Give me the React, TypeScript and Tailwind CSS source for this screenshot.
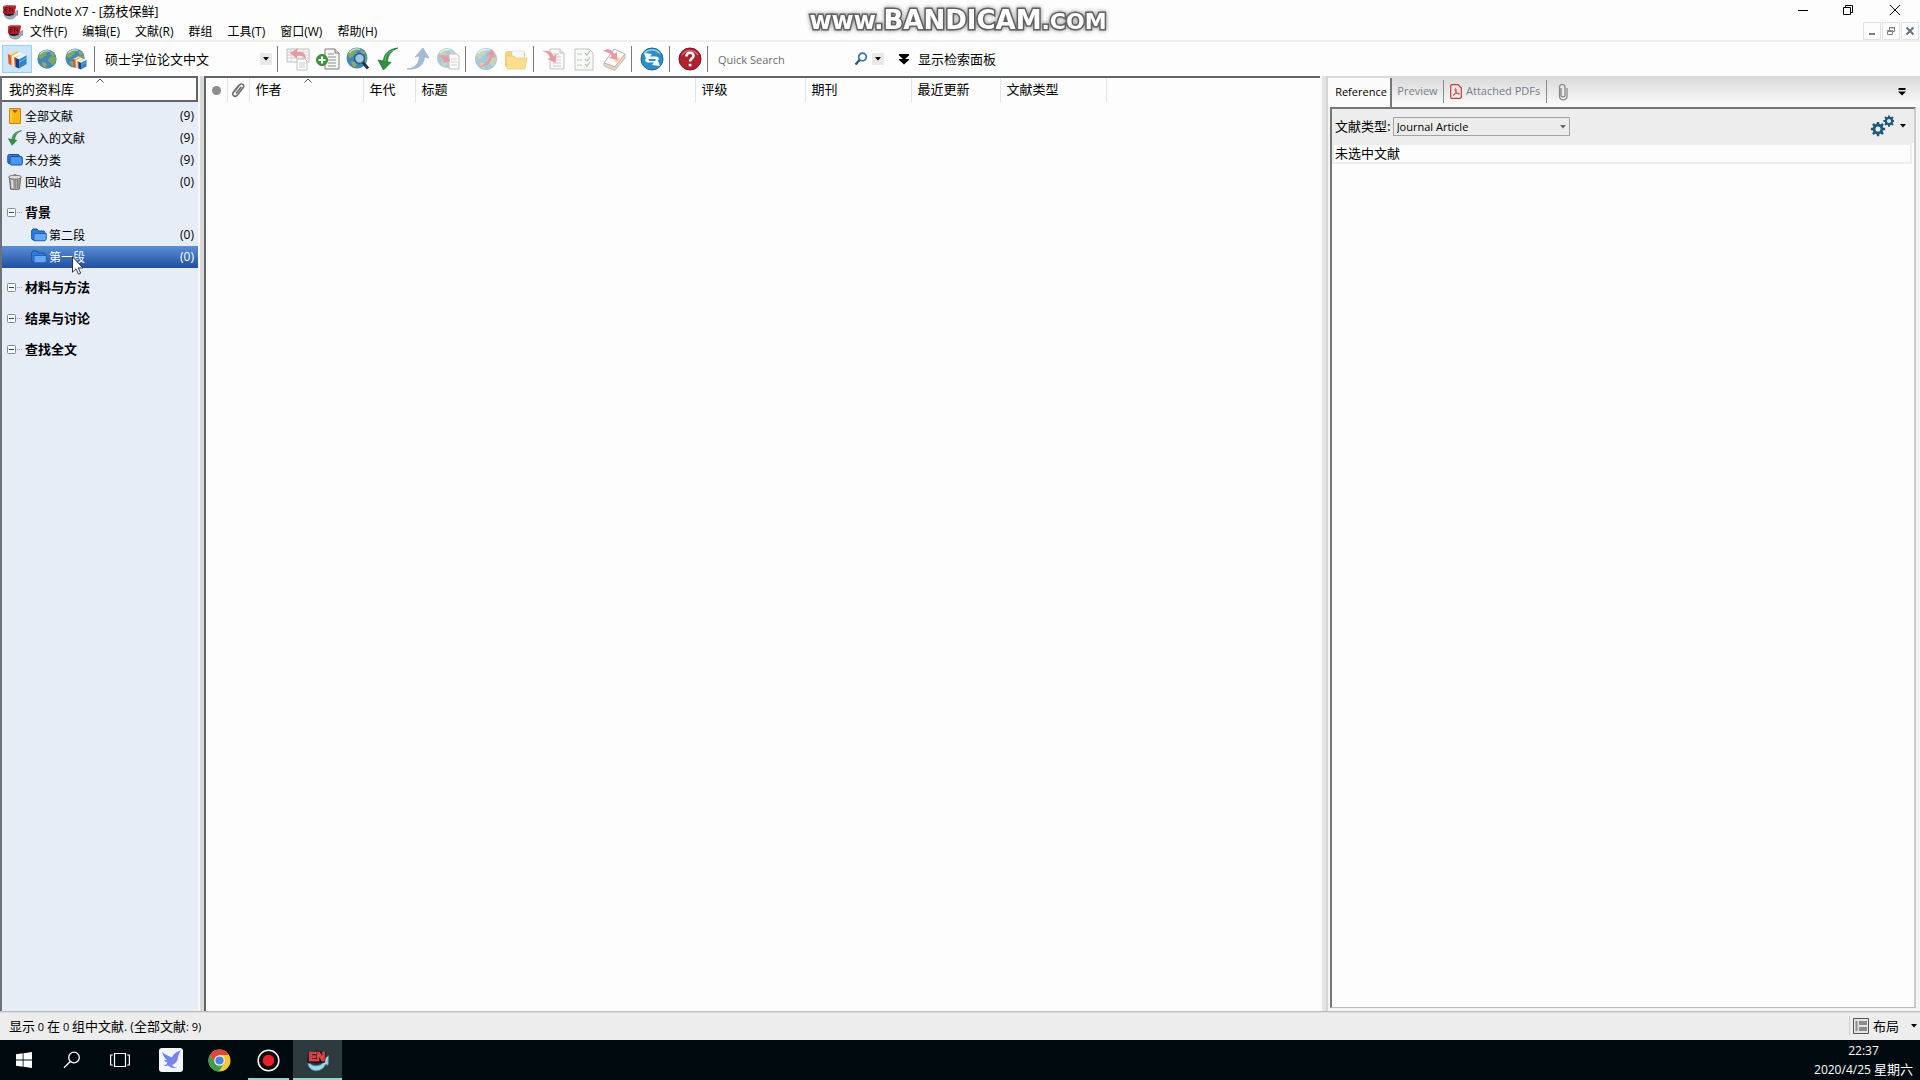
import React from "react";

type P = { className?: string };

const latin = "font-['Open_Sans','Noto_Sans_CJK_SC',sans-serif]";
const cjk = "font-['Noto_Sans_CJK_SC',sans-serif]";

/* ---------- application icons ---------- */

function EndNoteIcon({ className = "size-4" }: P) {
  return (
    <svg viewBox="0 0 24 24" className={className} aria-hidden="true">
      <path d="M2 15c1 9 14 11 18.500 1l2.500 1 .5-10-7 5 2.500 1C16 18 8 19 4 15z" fill="#9fd6ea" stroke="#4f8ba8" strokeWidth=".8" />
      <path d="M2 3l8-1.500L21 3l-1 11-8 1-9-.5L1 13z" fill="#2a1216" />
      <text x="2.500" y="13" fontSize="12.500" fontWeight="900" fontFamily="Liberation Sans, sans-serif" fill="#c81f2a" stroke="#f06a6a" strokeWidth=".7">
        EN
      </text>
    </svg>
  );
}

function EndNoteMini({ className = "size-4" }: P) {
  return (
    <svg viewBox="0 0 16 16" className={className} aria-hidden="true">
      <path d="M2 10.500c1 5.500 10 6.500 12 .5l1.500.3.300-5-3.300 2.200 1 .5c-1.500 3.500-6 4-9 1.500z" fill="#9fb6c6" stroke="#5c6b7a" strokeWidth=".6" />
      <path d="M1.200 2l4-1 8 .3 1 1-1.700 7L8 11l-5-.3-2-1.700z" fill="#b3222e" />
      <path d="M1.500 8.500L4 10l7-.2 1.500-1.300-1 2.500-4 1L3.500 11.500z" fill="#2e1418" />
      <path d="M3.500 3.500h2.200M3.500 5.500h2M3 7.800h2.500M3.500 3.500L3 7.800M7.500 8V3.500l3 4V3.500" stroke="#5a0d16" strokeWidth=".9" fill="none" />
      <path d="M2 2.300l4-.8 7 .3" stroke="#e8797f" strokeWidth=".7" fill="none" />
    </svg>
  );
}

function Globe({ x = 12, y = 12, r = 10.5 }: { x?: number; y?: number; r?: number }) {
  return (
    <g transform={`translate(${x} ${y}) scale(${r / 10})`}>
      <circle r="10" fill="#4389b4" />
      <path d="M-9-3c1-4 5-7 9-6l1 2-2 1 1 2-3 1-1 2-3 1-1-1zM2-1l3-2 4 1c1 4-1 7-4 9L4 4 1 2z" fill="#7fa865" />
      <path d="M-5 3l4 1 1 2-2 3c-2-1-4-4-3-6zM3-8l4 2 1 3-4-1z" fill="#93a768" />
      <path d="M-7-5c3-4 7-4 10-3" stroke="#c4e4f0" strokeWidth="1.200" fill="none" />
    </g>
  );
}

function Books() {
  return (
    <g>
      <path d="M1 6l9-4.500 3 1.500-8.500 4.500z" fill="#f3d9b4" />
      <path d="M1 6l3.500 1.500 1 12L2 18z" fill="#dc5a24" />
      <path d="M4.500 7.500L13 3l1 1v12l-8.500 3.500z" fill="#f1b03c" />
      <path d="M6 8.500l8-4.500 4 1.500-8.500 4.500z" fill="#fafafa" />
      <path d="M6 8.500L9.500 10l1 12L7 20.500z" fill="#f4f2ec" />
      <path d="M8.500 9.500L10 10l.7 12-1.500-.7z" fill="#d2452f" />
      <path d="M10 10.500l9-5 4.500 2-9 5z" fill="#e9f1f7" />
      <path d="M10 10.500l4.500 2v11L10.800 22z" fill="#173f7e" />
      <path d="M14.500 12.500l9-5v10.500l-9 5.500z" fill="#3183c9" />
      <path d="M14.500 16l9-5.500" stroke="#8ec3ea" strokeWidth="1" />
    </g>
  );
}

function Icon({ children, className = "size-6" }: P & { children: React.ReactNode }) {
  return (
    <svg viewBox="0 0 24 24" className={className} fill="none" aria-hidden="true">
      {children}
    </svg>
  );
}

function Page({ x = 8, y = 2 }: { x?: number; y?: number }) {
  return (
    <g transform={`translate(${x} ${y})`}>
      <path d="M0 0h10l4 4v16H0z" fill="#f6f6f4" stroke="#7a7f7c" strokeWidth="1" />
      <path d="M10 0v4h4" stroke="#7a7f7c" strokeWidth="1" fill="#dcdcdc" />
      <path d="M3 5h6M3 8h8M3 11h8M3 14h8M3 17h8" stroke="#8b908d" strokeWidth="1" />
    </g>
  );
}

const redArrow = "M0 4c5-1 10 0 11.500 5l3-2-1 9-8-4 3-1C7 8 5 5 0 4z";

function ImportArrow({ className = "size-6" }: P) {
  return (
    <Icon className={className}>
      <path d="M22 1C13 2 8 6 7.500 14L2 13l5.500 10L15 15.500l-3.500-.7C12 8 15 4 22 1z" fill="#2f9140" stroke="#1d6b2d" strokeWidth=".7" />
      <path d="M18 3C12 5 9.500 8 9 14" stroke="#79bd7f" strokeWidth="1" />
    </Icon>
  );
}

function SearchGlass() {
  return (
    <svg viewBox="0 0 14 14" className="size-3.5" fill="none" aria-hidden="true">
      <circle cx="8.500" cy="5" r="3.800" stroke="#3a77a8" strokeWidth="1.800" />
      <path d="M5.800 7.800L1.500 12.500" stroke="#2c4d6c" strokeWidth="2.200" />
    </svg>
  );
}

function Caret({ className = "" }: P) {
  return (
    <svg viewBox="0 0 6 4" className={"h-1 w-1.5 " + className} aria-hidden="true">
      <path d="M0 0h6L3 3.500z" fill="currentColor" />
    </svg>
  );
}

function Paperclip({ className = "size-4" }: P) {
  return (
    <svg viewBox="0 0 16 16" className={className} fill="none" aria-hidden="true">
      <path d="M4.500 9.500l5-6.500c2-2.300 5.500 0 3.700 2.600L7.300 13.200c-2 2.500-6.200 0-4-3L8.500 3.500M6.500 11L11 5.300" stroke="#6f6f6f" strokeWidth="1.600" strokeLinecap="round" />
    </svg>
  );
}

function FolderIcon() {
  return (
    <svg viewBox="0 0 16 14" className="h-3.5 w-4 shrink-0" aria-hidden="true">
      <path d="M.7 11V2.500L2 1h4l1.500 2H13l1 1.500V12H2z" fill="#2f7fe0" stroke="#164f9e" />
      <path d="M3 5.500h12.300V11L14 12.800H3z" fill="#62a8f5" stroke="#1d5cb0" strokeWidth=".9" />
    </svg>
  );
}

/* ---------- pieces of the toolbar ---------- */

function Divider() {
  return <span className="ml-[5px] mr-2 h-[26px] w-px shrink-0 bg-[#7a7a7a]" />;
}

function Tool({ label, dim, children }: { label: string; dim?: boolean; children: React.ReactNode }) {
  return (
    <button type="button" aria-label={label} disabled={dim} className="flex size-6 shrink-0 items-center justify-center">
      <Icon className={dim ? "size-6 opacity-45" : "size-6"}>{children}</Icon>
    </button>
  );
}

function Toolbar() {
  return (
    <div className="flex h-[34px] shrink-0 items-center bg-[#fdfdfd] pl-0.5">
      <button type="button" aria-label="本地资料库" className="flex h-7 w-[30px] items-center justify-center border border-[#99cdf5] bg-[#cbe6fb]">
        <Icon className="size-5"><Books /></Icon>
      </button>
      <button type="button" aria-label="在线检索" className="flex h-7 w-[30px] items-center justify-center">
        <Icon className="size-[22px]"><Globe /></Icon>
      </button>
      <button type="button" aria-label="综合模式" className="flex h-7 w-[27px] items-center justify-center">
        <Icon className="size-[22px]">
          <Globe x={11} y={11} r={10.500} />
          <g transform="translate(8 8) scale(.66)"><Books /></g>
        </Icon>
      </button>
      <Divider />
      <div className="ml-0.5 flex w-[167px] items-center justify-between">
        <span className={"text-[13px] " + cjk}>硕士学位论文中文</span>
        <button type="button" aria-label="选择样式" className="flex size-3 items-center justify-center bg-[#e9e9e9]">
          <Caret />
        </button>
      </div>
      <Divider />
      <div className="flex gap-1.5">
        <Tool label="复制到资料库" dim>
          <path d="M1 2h22v13H1z" fill="#f2f2f2" stroke="#777" />
          <path d="M1 5h22M1 8h22M1 11h22M5 2v13M17 2v13" stroke="#999" strokeWidth=".8" />
          <path d="M20 12c0-6-4-8-9-7l1-4-8 5 7 6v-3c4-1 6 0 9 3z" fill="#d21f3a" />
          <path d="M11 12h8l2 2v9H11z" fill="#fff" stroke="#777" />
          <path d="M13 16h6M13 18h6M13 20h6" stroke="#999" />
        </Tool>
        <Tool label="新建文献">
          <Page x={9} y={2} />
          <circle cx="6" cy="13" r="5.500" fill="#3d9a38" stroke="#236b22" strokeWidth=".8" />
          <path d="M6 9.500v7M2.500 13h7" stroke="#fff" strokeWidth="2" />
        </Tool>
        <Tool label="在线检索文献">
          <Globe x={11} y={11} r={10.500} />
          <circle cx="13.500" cy="11.500" r="5" fill="#a9d0ea" fillOpacity=".85" stroke="#245d8e" strokeWidth="1.600" />
          <path d="M17 15.500l5 6" stroke="#26344a" strokeWidth="3" />
        </Tool>
        <button type="button" aria-label="导入" className="size-6"><ImportArrow className="size-6" /></button>
        <Tool label="导出" dim>
          <path d="M1 22c9-1 12-6 12.500-13L9 10 17 1l6 10-4.500-1C18 18 12 23 1 22z" fill="#3a6f9e" stroke="#2b567d" strokeWidth=".7" />
        </Tool>
        <Tool label="查找全文" dim>
          <Globe x={11} y={11} r={10} />
          <path d="M13 7h8l2 2v13H13z" fill="#fff" stroke="#777" />
          <path d="M15 12h6M15 15h6M15 18h6" stroke="#999" />
          <path d="M1 9c5-2 8-1 9 1l2-2 2 6-7 2 1-3c-1-2-3-3-7-4z" fill="#d21f3a" />
        </Tool>
      </div>
      <Divider />
      <div className="flex gap-1.5">
        <Tool label="打开链接" dim>
          <Globe r={11} />
          <path d="M5 20c7-3 10-7 11-12l-4 1 6-7 4 9-4-1C17 16 12 20 5 20z" fill="#d21f3a" />
        </Tool>
        <Tool label="打开文件">
          <g opacity=".75">
            <path d="M1 20V6l2-2h6l2 2h10v14z" fill="#f0c552" />
            <path d="M8 4h12v8H8z" fill="#f8f8f4" stroke="#ccc" strokeWidth=".6" />
            <path d="M2 9h8l2 2h11l-2 11H3z" fill="#fad568" stroke="#e0b040" strokeWidth=".6" />
          </g>
        </Tool>
      </div>
      <Divider />
      <div className="flex gap-1.5">
        <Tool label="插入引文" dim>
          <Page x={8} y={2} />
          <path d={redArrow} fill="#d21f3a" />
        </Tool>
        <Tool label="格式化参考文献" dim>
          <path d="M3 2h14l4 4v17H3z" fill="#f6f6f4" stroke="#7a7f7c" />
          <path d="M5 7h5M5 13h5M5 18h5" stroke="#5b9a68" />
          <path d="M13 6l2 2 3-4M13 12l2 2 3-4M13 17l2 2 3-4" stroke="#4b8a58" strokeWidth="1.200" />
        </Tool>
        <Tool label="返回文字处理器" dim>
          <path d="M12 2l11 5-10 13L2 16z" fill="#fbf8f2" stroke="#555" />
          <path d="M23 7v4L13 23.500 2 19v-3l11 4z" fill="#d8a878" stroke="#555" strokeWidth=".8" />
          <path d="M15 10l4 2-3 4-4-2z" fill="#f0a040" />
          <path d="M1 4c5-3 9-2 11 3l3-2v8l-8-2 3-2C8 6 5 5 1 4z" fill="#d21f3a" />
        </Tool>
      </div>
      <Divider />
      <Tool label="同步">
        <circle cx="12" cy="12" r="11" fill="#2e8ec4" stroke="#1a6a99" />
        <path d="M4 6.500c5-5 11-5 16 0" stroke="#8ccbea" strokeWidth="1.500" />
        <path d="M4 6l8 1-2 2.500h6c2 0 3 1.500 3 3l-2 1c-1-1.500-2-1.500-3-1.500H9l-2 2.500zM20 19l-8-1 2-2.500H8c-2 0-3-1.500-3-3l2-1c1 1.500 2 2.500 3 2.500h5l2-2.500z" fill="#f4fafd" />
      </Tool>
      <Divider />
      <Tool label="帮助">
        <circle cx="12" cy="12" r="11" fill="#b0202f" stroke="#7d1420" />
        <path d="M4 8c4-6 12-6 16 0" stroke="#d8606c" strokeWidth="1.500" />
        <path d="M8.500 9.500C8.500 4.500 15.800 4.800 15.500 9c-.2 2.500-3.500 2.800-3.500 5.500" stroke="#fff" strokeWidth="2.600" />
        <path d="M10.700 16.800h2.700v2.500h-2.700z" fill="#fff" />
      </Tool>
      <Divider />
      <div className="flex items-center">
        <input type="search" aria-label="Quick Search" placeholder="Quick Search" className={"ml-0.5 w-[136px] bg-transparent pt-0.5 text-[11px] outline-none placeholder:text-[#6b6b6b] " + latin} />
        <button type="button" aria-label="检索"><SearchGlass /></button>
        <button type="button" aria-label="检索选项" className="ml-1 flex size-3 items-center justify-center bg-[#e9e9e9]">
          <Caret />
        </button>
      </div>
      <button type="button" className={"ml-3.5 flex items-center gap-2 text-[13px] " + cjk}>
        <svg viewBox="0 0 12 12" className="size-3" aria-hidden="true">
          <path d="M1 1h10v1.500L7 6h4v1L6 11.500 1 7V6h4L1 2.500z" fill="#000" />
        </svg>
        显示检索面板
      </button>
    </div>
  );
}

/* ---------- top bars ---------- */

function TitleBar() {
  return (
    <header className="relative flex h-[22px] shrink-0 items-start bg-[#fdfdfd]">
      <div className="flex h-6 items-center gap-[5px] pl-0.5">
        <EndNoteMini />
        <h1 className={"text-xs " + latin}>
          EndNote X7 - [<span className="text-[13px]">荔枝保鲜</span>]
        </h1>
      </div>
      <div className="absolute left-1/2 top-1 z-10 flex h-8 -translate-x-1/2 items-baseline whitespace-nowrap pr-1 font-['DejaVu_Sans',sans-serif] font-bold leading-8 text-white [-webkit-text-stroke:3px_#606060] [filter:drop-shadow(0_0_2px_#888)] [paint-order:stroke_fill]">
        <span className="text-2xl leading-8">www.</span>
        <span className="text-[26px] leading-8">BANDICAM</span>
        <span className="text-[22px] leading-8">.COM</span>
      </div>
      <div className="ml-auto flex h-5 items-center">
        <button type="button" aria-label="最小化" className="flex w-[45px] justify-center">
          <svg viewBox="0 0 12 12" className="size-3"><path d="M1 6.500h10" stroke="#000" /></svg>
        </button>
        <button type="button" aria-label="还原" className="flex w-[45px] justify-center">
          <svg viewBox="0 0 12 12" className="size-3" fill="none" stroke="#000"><path d="M1.500 3.500h7v7h-7zM3.500 3V1.500h7v7H9" /></svg>
        </button>
        <button type="button" aria-label="关闭" className="flex w-[50px] justify-center">
          <svg viewBox="0 0 12 12" className="size-3" fill="none" stroke="#000"><path d="M1 1l10 10M11 1L1 11" /></svg>
        </button>
      </div>
    </header>
  );
}

const menus = ["文件(F)", "编辑(E)", "文献(R)", "群组", "工具(T)", "窗口(W)", "帮助(H)"];

function MenuBar() {
  const box = "flex h-[18px] w-[18px] items-center justify-center border border-[#e2e2e2]";
  return (
    <div className="flex h-5 shrink-0 items-end border-b-2 border-[#efefef] bg-[#fdfdfd] pl-[7px]">
      <EndNoteMini />
      <nav className={"ml-[7px] flex gap-[15px] text-xs leading-4 " + latin}>
        {menus.map((m) => (
          <button type="button" key={m} className="whitespace-nowrap">{m}</button>
        ))}
      </nav>
      <div className="ml-auto mr-px flex gap-px">
        <button type="button" aria-label="最小化文档" className={box}>
          <svg viewBox="0 0 10 10" className="size-2.5"><path d="M2 8h6" stroke="#777f87" strokeWidth="2" /></svg>
        </button>
        <button type="button" aria-label="还原文档" className={box}>
          <svg viewBox="0 0 10 10" className="size-2.5" fill="none" stroke="#777f87"><path d="M1.500 5.500h5v3h-5zM1 4.700h6M3.500 4V1.500h5v4H7M3 1.800h6" /></svg>
        </button>
        <button type="button" aria-label="关闭文档" className={box}>
          <svg viewBox="0 0 10 10" className="size-2.5"><path d="M1.500 1.500l7 7M8.500 1.500l-7 7" stroke="#68727c" strokeWidth="2" /></svg>
        </button>
      </div>
    </div>
  );
}

/* ---------- sidebar ---------- */

function SortMark({ className = "" }: P) {
  return (
    <svg viewBox="0 0 8 5" className={"absolute top-0 h-[5px] w-2 " + className} fill="none" aria-hidden="true">
      <path d="M.5 4.500L4 1l3.500 3.500" stroke="#555" />
    </svg>
  );
}

function Count({ n }: { n: number }) {
  return <span className={"ml-auto text-xs " + latin}>({n})</span>;
}

const libraryRows: { label: string; n: number; icon: React.ReactNode }[] = [
  {
    label: "全部文献",
    n: 9,
    icon: (
      <svg viewBox="0 0 16 16" className="size-4 shrink-0" aria-hidden="true">
        <path d="M2.500.5h11v15h-11z" fill="#fbb713" stroke="#c98508" />
        <path d="M5 2h6L8 5z" fill="#a0522d" />
        <path d="M4 2v12" stroke="#ffdc73" />
      </svg>
    ),
  },
  { label: "导入的文献", n: 9, icon: <ImportArrow className="size-4 shrink-0" /> },
  {
    label: "未分类",
    n: 9,
    icon: (
      <svg viewBox="0 0 16 14" className="h-3.5 w-4 shrink-0" aria-hidden="true">
        <rect x=".8" y="1.500" width="11.500" height="9" rx="1.500" fill="#2f7fe0" stroke="#164f9e" />
        <rect x="3" y="3.500" width="12.300" height="8.500" rx="1.500" fill="#4a96f2" stroke="#164f9e" />
      </svg>
    ),
  },
  {
    label: "回收站",
    n: 0,
    icon: (
      <svg viewBox="0 0 16 16" className="size-4 shrink-0" aria-hidden="true">
        <path d="M2.500 4h11L12.500 15c-2 1-7 1-9 0z" fill="#a9a9a6" stroke="#5e5e5a" />
        <path d="M5 6l.5 8" stroke="#e6e6e2" strokeWidth="1.500" />
        <path d="M8 6v8.500M11 6l-.5 8" stroke="#777773" />
        <ellipse cx="8" cy="3.200" rx="6.500" ry="2" fill="#dededa" stroke="#5e5e5a" strokeWidth=".8" />
        <path d="M6.500 1.500c.5-1 2.500-1 3 0" stroke="#5e5e5a" fill="none" />
      </svg>
    ),
  },
];

function GroupHead({ label }: { label: string }) {
  return (
    <button type="button" aria-expanded="true" className={"mt-[9px] flex h-[22px] w-full items-center pb-0.5 pl-[5px] text-[13px] font-bold " + cjk}>
      <svg viewBox="0 0 18 9" className="h-[9px] w-[18px]" fill="none" aria-hidden="true">
        <rect x=".5" y=".5" width="8" height="8" rx="1" fill="#fff" stroke="#848b94" />
        <path d="M2 4.500h5" stroke="#34445c" />
        <path d="M10 4.500h6" stroke="#9aa0a8" strokeDasharray="1 1" />
      </svg>
      {label}
    </button>
  );
}

function Sidebar() {
  return (
    <aside className="flex w-[198px] shrink-0 flex-col border-l-2 border-[#6e7278] bg-[#e6edf7]">
      <div className={"relative flex h-[26px] shrink-0 items-center border-2 border-l-0 border-[#62656a] bg-[#fdfdfd] pl-[7px] text-[13px] " + cjk}>
        我的资料库
        <SortMark className="left-[94px]" />
      </div>
      <ul className="mt-[3px]">
        {libraryRows.map((r) => (
          <li key={r.label}>
            <button type="button" className="flex h-[22px] w-full items-center gap-[2px] pl-[5px] pr-1">
              {r.icon}
              <span className={"text-xs " + cjk}>{r.label}</span>
              <Count n={r.n} />
            </button>
          </li>
        ))}
      </ul>
      <GroupHead label="背景" />
      <ul>
        <li>
          <button type="button" className="flex h-[22px] w-full items-center gap-[2px] pl-[29px] pr-1">
            <FolderIcon />
            <span className={"text-xs " + cjk}>第二段</span>
            <Count n={0} />
          </button>
        </li>
        <li className="relative">
          <button type="button" className="flex h-[22px] w-full items-center gap-[2px] bg-linear-to-b from-[#5b8fd6] to-[#1f4f9f] pl-[29px] pr-1 text-white">
            <FolderIcon />
            <span className={"text-xs " + cjk}>第一段</span>
            <Count n={0} />
          </button>
          <svg viewBox="0 0 12 19" className="pointer-events-none absolute left-[70px] top-2.5 h-[19px] w-3" aria-hidden="true">
            <path d="M.5.8v15.400l3.500-3.400 2.500 5.400 2.200-1L6.200 12H11z" fill="#fff" stroke="#222" strokeWidth=".9" />
          </svg>
        </li>
      </ul>
      <GroupHead label="材料与方法" />
      <GroupHead label="结果与讨论" />
      <GroupHead label="查找全文" />
    </aside>
  );
}

/* ---------- reference list ---------- */

const columns = [
  { label: "作者", cls: "w-[114px]", sorted: true },
  { label: "年代", cls: "w-[52px]" },
  { label: "标题", cls: "w-[280px]" },
  { label: "评级", cls: "w-[110px]" },
  { label: "期刊", cls: "w-[106px]" },
  { label: "最近更新", cls: "w-[89px]" },
  { label: "文献类型", cls: "w-[106px]" },
];

function ReferenceList() {
  return (
    <main className="min-w-0 flex-1 border-l-2 border-t-2 border-[#62656a] bg-[#fdfdfd]">
      <table className={"w-full table-fixed border-collapse text-[13px] " + cjk}>
        <thead>
          <tr className="h-6">
            <th aria-label="已读" className="w-[21px] border-r border-[#e3e3e3] p-0">
              <span className="mx-auto block size-[9px] rounded-full bg-[#8c8c8c]" />
            </th>
            <th aria-label="附件" className="w-[22px] border-r border-[#e3e3e3] p-0">
              <Paperclip className="mx-auto size-4" />
            </th>
            {columns.map((c) => (
              <th key={c.label} className={"relative border-r border-[#e3e3e3] p-0 pb-0.5 pl-1.5 text-left font-normal leading-5 " + c.cls}>
                {c.label}
                {c.sorted && <SortMark className="left-[54px]" />}
              </th>
            ))}
            <th className="p-0" aria-label="空白" />
          </tr>
        </thead>
      </table>
    </main>
  );
}

/* ---------- right panel ---------- */

function Gear({ x, y, s }: { x: number; y: number; s: number }) {
  return (
    <g transform={`translate(${x} ${y}) scale(${s})`} stroke="#1d587f">
      <circle r="4.200" strokeWidth="3" fill="none" />
      <path d="M0-7.500v3M0 7.500v-3M-7.500 0h3M7.500 0h-3M-5.300-5.300l2 2M5.300-5.300l-2 2M-5.300 5.300l2-2M5.300 5.300l-2-2" strokeWidth="2.600" />
    </g>
  );
}

function DetailPanel() {
  return (
    <section className="flex w-[594px] shrink-0 flex-col border-l-2 border-[#d5d5d5] bg-[#f4f4f4]">
      <div className={"flex h-[31px] shrink-0 items-stretch bg-linear-to-b from-[#d9d9d9] to-[#fbfbfb] text-[11px] text-[#75808a] " + latin} role="tablist">
        <button type="button" role="tab" aria-selected="true" className="mt-0.5 w-16 border-r-2 border-[#777] bg-[#fbfbfb] pl-1 text-black">
          Reference
        </button>
        <button type="button" role="tab" aria-selected="false" className="w-[51px]">Preview</button>
        <span className="my-1 w-px bg-[#8c8c8c]" />
        <button type="button" role="tab" aria-selected="false" className="flex w-[102px] items-center gap-1 whitespace-nowrap pl-1.5">
          <svg viewBox="0 0 12 15" className="h-[15px] w-3 shrink-0" fill="none" stroke="#c43c3c" aria-hidden="true">
            <path d="M1.500.7h6.500L11.300 4v9.500l-1 .8h-9l-.6-1V1.500z" strokeWidth="1.200" />
            <path d="M3 11.500c2.500-1.500 4-5 3-6.500s-1.500 1 .5 3.500 4 1.500 2.500.8-4 .2-6 2.200z" strokeWidth=".9" />
          </svg>
          Attached PDFs
        </button>
        <span className="my-1 w-px bg-[#8c8c8c]" />
        <button type="button" role="tab" aria-selected="false" aria-label="附件" className="flex w-8 items-center justify-center">
          <svg viewBox="0 0 10 18" className="h-[18px] w-2.5" fill="none" aria-hidden="true">
            <path d="M3 5v7c0 2.500 4 2.500 4 0V4C7 .5 1.500.5 1.500 4v9c0 5 7.500 5 7.500 0V5" stroke="#8a8a8a" strokeWidth="1.300" />
          </svg>
        </button>
        <button type="button" aria-label="面板选项" className="ml-auto mr-3.5 flex items-center">
          <svg viewBox="0 0 8 8" className="size-2" aria-hidden="true"><path d="M.5 0h7v2h-7zM0 3.500h8L4 7.500z" fill="#000" /></svg>
        </button>
      </div>
      <div className="mr-1 mb-[3px] ml-0.5 flex flex-1 flex-col border-2 border-b border-r-2 border-[#777] border-b-[#bbb] border-r-[#ccc] bg-[#fdfdfd]">
        <div className="flex h-[34px] shrink-0 items-center bg-[#ededed] pl-[3px] text-black">
          <label htmlFor="ref-type" className={"text-[13px] " + cjk}>文献类型:</label>
          <div className="relative ml-0.5">
            <select id="ref-type" className={"block h-[19px] w-[177px] appearance-none border border-[#a3a3a3] bg-[#ececec] pl-[3px] text-[11px] leading-[17px] " + latin}>
              <option>Journal Article</option>
            </select>
            <Caret className="pointer-events-none absolute right-1 top-2 text-[#666]" />
          </div>
          <button type="button" aria-label="设置" className="ml-auto mr-2 flex items-center gap-1.5">
            <svg viewBox="0 0 24 22" className="h-[22px] w-6" fill="none" aria-hidden="true">
              <Gear x={8} y={14} s={0.95} />
              <Gear x={19} y={6} s={0.75} />
            </svg>
            <Caret />
          </button>
        </div>
        <p className={"mr-0.5 h-[21px] border-2 border-[#ededed] pl-px text-[13px] leading-4 " + cjk}>未选中文献</p>
      </div>
    </section>
  );
}

/* ---------- status bar and taskbar ---------- */

function StatusBar() {
  return (
    <footer className={"flex h-7 shrink-0 items-center border-t border-[#dcdcdc] bg-[#ededed] pb-0.5 pl-[9px] text-[13px] " + cjk}>
      <span className="whitespace-pre">
        显示<span className={"text-[11px] " + latin}> 0 </span>在<span className={"text-[11px] " + latin}> 0 </span>组中文献<span className={"text-xs " + latin}>. (</span>全部文献<span className={"text-[11px] " + latin}>: 9)</span>
      </span>
      <button type="button" className="ml-auto mr-[3px] flex items-center border-l border-[#cfcfcf] pl-[3px]">
        <svg viewBox="0 0 16 16" className="size-4" aria-hidden="true">
          <path d="M.5.5h15v15H.5z" fill="#e4e4e4" stroke="#555" />
          <path d="M2.500 3h2v10h-2zM6 3h8v4H6zM6 9h8v4H6z" fill="#8c8c8c" />
        </svg>
        <span className="ml-1">布局</span>
        <Caret className="ml-3" />
      </button>
    </footer>
  );
}

function Task({ label, state = "", width = "w-[49px]", children }: { label: string; state?: string; width?: string; children: React.ReactNode }) {
  return (
    <button type="button" aria-label={label} className={"relative flex items-center justify-center " + width + (state === "active" ? " bg-[#2d3b3f]" : "")}>
      {children}
      {state !== "" && (
        <span className={"absolute bottom-0 h-0.5 bg-[#8fd8c8] " + (state === "active" ? "inset-x-0" : "inset-x-1")} />
      )}
    </button>
  );
}

function Taskbar() {
  return (
    <div className="flex h-10 shrink-0 bg-[#010b0f] text-white">
      <Task label="开始" width="w-12">
        <svg viewBox="0 0 16 16" className="size-4"><path d="M0 2.300l6.700-1v6.300H0zM7.500 1.200L16 0v7.600H7.500zM0 8.400h6.700v6.300L0 13.700zM7.500 8.400H16V16l-8.500-1.200z" fill="#fff" /></svg>
      </Task>
      <Task label="搜索" width="w-12">
        <svg viewBox="0 0 18 18" className="size-[18px]" fill="none" stroke="#fff" strokeWidth="1.300"><circle cx="11" cy="6.500" r="5.300" /><path d="M7.300 10.500L1 16.800" /></svg>
      </Task>
      <Task label="任务视图" width="mr-0.5 w-12">
        <svg viewBox="0 0 20 16" className="h-4 w-5" fill="none" stroke="#fff" strokeWidth="1.200"><path d="M4.500 1.500h11v13h-11zM2.800 3H.6v10h2.200M17.200 3h2.200v10h-2.200" /></svg>
      </Task>
      <Task label="迅雷">
        <svg viewBox="0 0 24 24" className="size-6">
          <defs>
            <linearGradient id="bird" x1="0" y1="0" x2="1" y2="1"><stop offset="0" stopColor="#4d8df0" /><stop offset="1" stopColor="#9c7be8" /></linearGradient>
          </defs>
          <rect width="24" height="24" rx="3" fill="#f2f5fc" />
          <path d="M3 4c3 3 7 4 10 5.500C14 6 17 4 21.500 2.500c-1 3-2 4.500-2.500 6.500-.5 4-2 6.500-6 8 1 1.500 3 2.500 5 3-4 .5-7-.5-9-2.500-1.500.5-3 .5-4.500.5 2-.8 3.500-2 4-3.500-2-.5-3-1.500-3.500-3 1 .5 2 .7 3 .5C5.500 10 4 7.500 3 4z" fill="url(#bird)" />
        </svg>
      </Task>
      <Task label="Chrome">
        <svg viewBox="0 0 24 24" className="size-[23px]">
          <circle cx="12" cy="12" r="11.500" fill="#f5c73b" />
          <path d="M2 6.300A11.500 11.500 0 0122 6.300H12L7 14.500z" fill="#d9483b" />
          <path d="M2 6.300A11.500 11.500 0 0011.500 23.500l5-8.700-4.500 2-5-2.300z" fill="#3f9c4f" />
          <circle cx="12" cy="12" r="5.500" fill="#f7f7f7" />
          <circle cx="12" cy="12" r="4.300" fill="#4a86e0" />
        </svg>
      </Task>
      <Task label="Bandicam" state="running">
        <svg viewBox="0 0 24 24" className="size-[23px]">
          <circle cx="12" cy="12" r="10.800" fill="#12090b" stroke="#f2f2f2" strokeWidth="1.600" />
          <circle cx="12" cy="12" r="6" fill="#e8202a" />
        </svg>
      </Task>
      <Task label="EndNote" state="active"><EndNoteIcon className="size-[23px]" /></Task>
      <div className={"ml-auto mr-[7px] flex flex-col items-center justify-center text-xs leading-[19px] " + latin}>
        <time>22:37</time>
        <time>2020/4/25 <span className="text-[13px]">星期六</span></time>
      </div>
    </div>
  );
}

export default function App() {
  return (
    <div className={"flex min-h-screen flex-col overflow-hidden bg-[#ededed] text-black " + latin}>
      <TitleBar />
      <MenuBar />
      <Toolbar />
      <div className="flex flex-1 border-b border-[#bdbdbd]">
        <Sidebar />
        <div className="w-1.5 shrink-0 border-l-2 border-[#f8f8f8] bg-[#d8d8d8]" />
        <ReferenceList />
        <div className="w-1.5 shrink-0 border-l-2 border-[#fafafa] bg-[#e4e4e4]" />
        <DetailPanel />
      </div>
      <StatusBar />
      <Taskbar />
    </div>
  );
}
